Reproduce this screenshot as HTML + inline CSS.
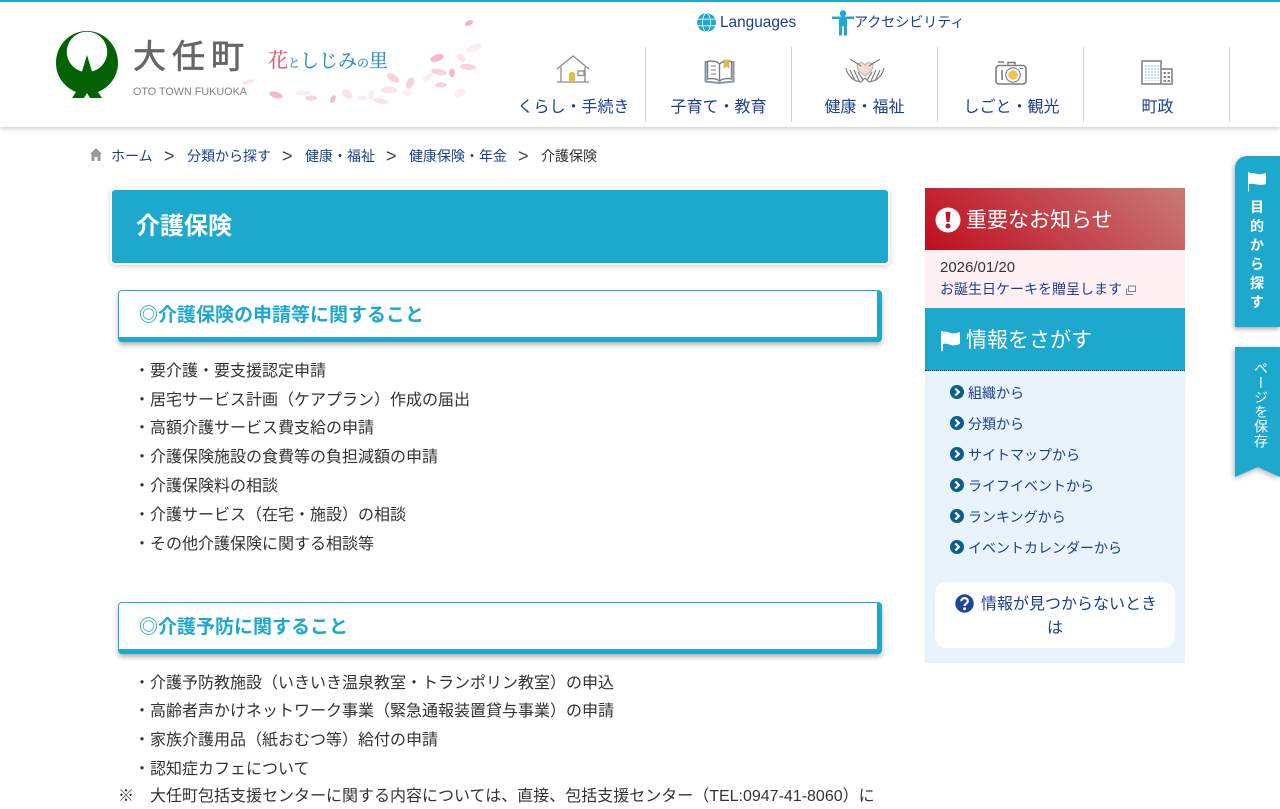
<!DOCTYPE html>
<html lang="ja"><head><meta charset="utf-8"><title>介護保険</title>
<style>
html,body{margin:0;padding:0;background:#fff}
body{width:1280px;height:800px;overflow:hidden;position:relative;font-family:"Liberation Sans","Noto Sans CJK JP",sans-serif;color:#333;font-size:16px}
.a{position:absolute;white-space:nowrap}
.link{color:#1b3f8f}
#hd{position:absolute;left:0;top:0;width:1280px;height:127px;background:#fff;border-top:2px solid #1da8cd;box-sizing:border-box;box-shadow:0 1px 5px rgba(0,0,0,.25)}
.sep{position:absolute;top:47px;width:1px;height:75px;background:#d2d2d2}
.nav{position:absolute;top:97px;width:145px;text-align:center;font-size:16px;line-height:22px;color:#1b3f8f}
.bc{font-size:14px;line-height:20px;top:146px}
.gt{font-size:18px;color:#444;top:146px;line-height:20px}
.h1{position:absolute;left:112px;top:190px;width:776px;height:73px;background:#1da8cd;border-radius:3px;box-shadow:0 0 0 2px #fff,0 1px 4px 2px rgba(0,0,0,.2)}
.h2{position:absolute;left:118px;width:764px;height:52px;box-sizing:border-box;background:#fff;border:1px solid #1da8cd;border-right-width:5px;border-bottom-width:5px;border-radius:4px;box-shadow:0 3px 5px rgba(0,0,0,.3)}
.h2t{font-size:19px;font-weight:700;color:#1da8cd;line-height:28px}
.li{left:134px;line-height:24px;color:#333;font-size:16px}
.s{font-size:14px;line-height:20px;left:968px;color:#1b3f8f}
.dot{position:absolute;left:950px;width:14px;height:14px}
</style></head><body>
<div id="hd"></div>

<!-- logo -->
<svg class="a" style="left:50px;top:15px" width="440" height="95" viewBox="50 15 440 95">
<path fill="#036303" d="M87 31C70 31 56 45 56 63c0 13 8 24 20 29l-4 6h12l3-5 3 5h12l-4-6c12-5 20-16 20-29 0-18-14-32-31-32z"/>
<path fill="#fff" d="M82 71.500A20.200 20.200 0 1 1 92 71.500L87 55z"/>
<g fill="#f6d3dc">
<ellipse cx="469" cy="23" rx="4.500" ry="2.500" fill="#f0b4c4" transform="rotate(-25 469 23)"/>
<ellipse cx="474" cy="48" rx="8" ry="3.500" fill="#fbeef1" transform="rotate(-25 474 48)"/>
<ellipse cx="437" cy="58" rx="7" ry="3.500" fill="#f3b9c8" transform="rotate(-20 437 58)"/>
<ellipse cx="461" cy="58" rx="5" ry="3" fill="#fae3e9" transform="rotate(35 461 58)"/>
<ellipse cx="468" cy="67" rx="8" ry="3" transform="rotate(5 468 67)"/>
<ellipse cx="439" cy="72" rx="8" ry="3" transform="rotate(10 439 72)"/>
<ellipse cx="452" cy="73" rx="3" ry="4.500" fill="#f3bccb"/>
<ellipse cx="428" cy="77" rx="6" ry="2.500" fill="#fbeef1" transform="rotate(-35 428 77)"/>
<ellipse cx="441" cy="85" rx="6" ry="2.500"/>
<ellipse cx="460" cy="93" rx="6" ry="4" fill="#fbeef1" transform="rotate(-30 460 93)"/>
<ellipse cx="393" cy="78" rx="7" ry="3.500" transform="rotate(30 393 78)"/>
<ellipse cx="410" cy="83" rx="3.500" ry="6" transform="rotate(25 410 83)"/>
<ellipse cx="389" cy="90" rx="8" ry="3.500" fill="#fae3e9"/>
<ellipse cx="408" cy="93" rx="5" ry="3" fill="#fbeef1"/>
<ellipse cx="347" cy="94" rx="6" ry="4" fill="#fae3e9" transform="rotate(35 347 94)"/>
<ellipse cx="371" cy="95" rx="3" ry="4.500" fill="#fbeef1"/>
<ellipse cx="362" cy="98" rx="5" ry="2.500" fill="#fbeef1"/>
<ellipse cx="381" cy="101" rx="8" ry="2.500" fill="#fae3e9" transform="rotate(10 381 101)"/>
<ellipse cx="276" cy="95" rx="7" ry="3" fill="#f3b9c8" transform="rotate(15 276 95)"/>
<ellipse cx="303" cy="93" rx="8" ry="2.500" fill="#fbeef1"/>
<ellipse cx="311" cy="98" rx="6" ry="2.500" />
<ellipse cx="333" cy="99" rx="2.500" ry="4" fill="#f3b9c8" transform="rotate(25 333 99)"/>
<ellipse cx="248" cy="82" rx="6" ry="2" fill="#fae3e9" transform="rotate(-15 248 82)"/>
</g>
</svg>
<div class="a" style="left:133px;top:36px;font-size:33px;line-height:42px;letter-spacing:6px;color:#666;-webkit-text-stroke:.7px #666">大任町</div>
<div class="a" style="left:133px;top:85px;font-size:10.800px;line-height:14px;color:#828282">OTO TOWN FUKUOKA</div>
<div class="a" style="left:268px;top:46px;font-family:'Noto Serif CJK SC','Liberation Serif',serif;line-height:26px;font-size:19px;color:#2c8dc0;-webkit-text-stroke:.2px #2c8dc0"><span style="color:#d9626b;-webkit-text-stroke:.2px #d9626b;font-size:20px">花</span><span style="font-size:12px">と</span>しじみ<span style="font-size:12px">の</span>里</div>

<!-- top links -->
<svg class="a" style="left:697px;top:13px" width="19" height="19" viewBox="0 0 19 19"><circle cx="9.500" cy="9.500" r="9.400" fill="#1da8cd"/><g fill="none" stroke="#fff" stroke-width=".8"><ellipse cx="9.500" cy="9.500" rx="4" ry="9.200"/><path d="M.5 6.200h18M.5 12.800h18"/></g></svg>
<div class="a link" style="left:720px;top:13px;font-size:15.400px;line-height:20px">Languages</div>
<svg class="a" style="left:832px;top:10px" width="22" height="26" viewBox="0 0 22 26"><circle cx="11" cy="3.500" r="3.200" fill="#1da8cd"/><path fill="#1da8cd" d="M0 6.500h22v2.500h-7v16.500h-3v-9h-2v9H7V9H0z"/></svg>
<div class="a link" style="left:854px;top:12px;font-size:14px;line-height:20px">アクセシビリティ</div>

<!-- nav icons -->
<svg class="a" style="left:555px;top:54px" width="36" height="30" viewBox="0 0 36 30" fill="none" stroke="#8a8a8a" stroke-width="1.300"><path d="M2 15 18 2l16 13M6 13v15M30 13v15M2 28h32"/><rect x="14" y="18" width="6" height="10" rx="2.500" fill="#e9bb42" stroke="none"/><rect x="23" y="17" width="6" height="4.500"/></svg>
<svg class="a" style="left:704px;top:58px" width="31" height="27" viewBox="0 0 31 27" fill="none" stroke="#7d7d7d" stroke-width="1.400"><path d="M3 4H1.500v19.500L15 25l14.500-1.500V4H28" stroke="#8a96a5" stroke-width="2"/><path d="M15.500 6C13 3 7 2.500 3.500 3.500v17.500c4-1 9-.5 12 2 3-2.500 8-3 12-2V3.500c-4-1-9-.5-12 2.500zM15.500 6v17"/><path d="M7 8h5M7 12h5M7 16h5" stroke-width="1"/><path d="M20 2h5v8l-2.500-2-2.500 2z" fill="#e9bb42" stroke="#c9a84a" stroke-width=".6"/></svg>
<svg class="a" style="left:845px;top:59px" width="40" height="25" viewBox="0 0 40 25" fill="none" stroke="#7d7d7d" stroke-width="1.200"><path d="M20 17c-4-3-8-6-8-10 0-3 5-5 8-1 3-4 8-2 8 1 0 4-4 7-8 10z" fill="#f7d9d2" stroke="#c9b3ae"/><path d="M5 0l11 7M35 0 24 7"/><path d="M1 9c1 6 6 13 15 14l4-4M39 9c-1 6-6 13-15 14l-4-4M5 11l5 11M9 11l5 11M35 11l-5 11M31 11l-5 11M13 13l5 8M27 13l-5 8"/></svg>
<svg class="a" style="left:995px;top:60px" width="32" height="25" viewBox="0 0 32 25" fill="none" stroke="#7d7d7d" stroke-width="1.600"><rect x="1" y="5.500" width="30" height="18.500" rx="3"/><path d="M3 2h6M13 4.500V2.500h7v2" stroke-width="1.600"/><path d="M7 10v10"/><circle cx="18" cy="15" r="7.200" stroke-width="1.100"/><circle cx="18" cy="15" r="4.800" fill="#eec450" stroke="none"/><path d="M25 8.500h3" stroke-width="1"/></svg>
<svg class="a" style="left:1141px;top:60px" width="32" height="25" viewBox="0 0 32 25"><path fill="#fff" stroke="#7d7d7d" stroke-width="1.500" d="M1 1h19v23H1zM20 9h11v15H20z"/><g fill="none" stroke="#cddff5" stroke-width="2" stroke-dasharray="2 1"><path d="M5 5v16M8 5v16M11 5v16M14 5v16M17 5v16"/></g><g fill="#8a8a8a"><rect x="22.500" y="12" width="2.500" height="2"/><rect x="26.500" y="12" width="2.500" height="2"/><rect x="22.500" y="16" width="2.500" height="2"/><rect x="26.500" y="16" width="2.500" height="2"/><rect x="22.500" y="20" width="2.500" height="2"/><rect x="26.500" y="20" width="2.500" height="2"/></g></svg>

<div class="sep" style="left:645px"></div><div class="sep" style="left:791px"></div><div class="sep" style="left:937px"></div><div class="sep" style="left:1083px"></div><div class="sep" style="left:1229px"></div>
<div class="nav" style="left:501px">くらし・手続き</div>
<div class="nav" style="left:646px">子育て・教育</div>
<div class="nav" style="left:792px">健康・福祉</div>
<div class="nav" style="left:939px">しごと・観光</div>
<div class="nav" style="left:1085px">町政</div>

<!-- breadcrumb -->
<svg class="a" style="left:90px;top:148px" width="12" height="13" viewBox="0 0 12 13"><path fill="#999" d="M6 0 0 6h1.500v7h3V9h3v4h3V6H12z"/></svg>
<div class="a bc link" style="left:111px">ホーム</div>
<div class="a gt" style="left:164px">&gt;</div>
<div class="a bc link" style="left:187px">分類から探す</div>
<div class="a gt" style="left:282px">&gt;</div>
<div class="a bc link" style="left:305px">健康・福祉</div>
<div class="a gt" style="left:386px">&gt;</div>
<div class="a bc link" style="left:409px">健康保険・年金</div>
<div class="a gt" style="left:518px">&gt;</div>
<div class="a bc" style="left:541px">介護保険</div>

<!-- main -->
<div class="h1"></div>
<div class="a" style="left:136px;top:210px;font-size:24px;font-weight:700;line-height:34px;color:#fff">介護保険</div>

<div class="h2" style="top:290px"></div>
<div class="a h2t" style="left:139px;top:302px">◎介護保険の申請等に関すること</div>
<div class="a li" style="top:360px">・要介護・要支援認定申請</div>
<div class="a li" style="top:389px">・居宅サービス計画（ケアプラン）作成の届出</div>
<div class="a li" style="top:417px">・高額介護サービス費支給の申請</div>
<div class="a li" style="top:446px">・介護保険施設の食費等の負担減額の申請</div>
<div class="a li" style="top:475px">・介護保険料の相談</div>
<div class="a li" style="top:504px">・介護サービス（在宅・施設）の相談</div>
<div class="a li" style="top:533px">・その他介護保険に関する相談等</div>

<div class="h2" style="top:602px"></div>
<div class="a h2t" style="left:139px;top:614px">◎介護予防に関すること</div>
<div class="a li" style="top:672px">・介護予防教施設（いきいき温泉教室・トランポリン教室）の申込</div>
<div class="a li" style="top:700px">・高齢者声かけネットワーク事業（緊急通報装置貸与事業）の申請</div>
<div class="a li" style="top:729px">・家族介護用品（紙おむつ等）給付の申請</div>
<div class="a li" style="top:758px">・認知症カフェについて</div>
<div class="a li" style="left:118px;top:785px">※　大任町包括支援センターに関する内容については、直接、包括支援センター（TEL:0947-41-8060）に</div>

<!-- sidebar -->
<div class="a" style="left:925px;top:188px;width:260px;height:62px;background:linear-gradient(45deg,#c00d20,#c87a78)"></div>
<svg class="a" style="left:935px;top:207px" width="26" height="26" viewBox="0 0 26 26"><circle cx="13" cy="13" r="12.500" fill="#fff"/><path fill="#c0152a" d="M10.500 5h5l-1 10h-3z"/><circle cx="13" cy="19" r="2.500" fill="#c0152a"/></svg>
<div class="a" style="left:966px;top:206px;font-size:21px;line-height:30px;color:#fff">重要なお知らせ</div>
<div class="a" style="left:925px;top:250px;width:260px;height:58px;background:#fff0f3"></div>
<div class="a" style="left:940px;top:258px;font-size:15px;line-height:20px">2026/01/20</div>
<div class="a link" style="left:940px;top:279px;font-size:14px;line-height:20px">お誕生日ケーキを贈呈します</div>
<svg class="a" style="left:1126px;top:285px" width="10" height="10" viewBox="0 0 10 10" fill="none" stroke="#7b8594"><rect x="2.500" y="1" width="7" height="5.500"/><path d="M.5 3.500v6h7"/></svg>
<div class="a" style="left:925px;top:308px;width:260px;height:63px;box-sizing:border-box;background:#1da8cd;border-bottom:1px dotted #333"></div>
<svg class="a" style="left:940px;top:330px" width="21" height="21" viewBox="0 0 21 21"><path fill="#fff" d="M1 1h2v1c3-1 5 0 8 1s6 0 9-1v12c-3 1-6 2-9 1s-5-2-8-1v7H1z"/></svg>
<div class="a" style="left:966px;top:326px;font-size:21px;line-height:30px;color:#fff">情報をさがす</div>
<div class="a" style="left:925px;top:371px;width:260px;height:292px;background:#e8f3fc"></div>
<svg width="0" height="0" style="position:absolute"><defs><symbol id="d" viewBox="0 0 14 14"><circle cx="7" cy="7" r="7" fill="#0b5f8a"/><path d="M5.300 3.500 8.800 7l-3.500 3.500" fill="none" stroke="#fff" stroke-width="2.200"/></symbol></defs></svg>
<svg class="dot" style="top:385px"><use href="#d"/></svg><div class="a s" style="top:383px">組織から</div>
<svg class="dot" style="top:416px"><use href="#d"/></svg><div class="a s" style="top:414px">分類から</div>
<svg class="dot" style="top:447px"><use href="#d"/></svg><div class="a s" style="top:445px">サイトマップから</div>
<svg class="dot" style="top:478px"><use href="#d"/></svg><div class="a s" style="top:476px">ライフイベントから</div>
<svg class="dot" style="top:509px"><use href="#d"/></svg><div class="a s" style="top:507px">ランキングから</div>
<svg class="dot" style="top:540px"><use href="#d"/></svg><div class="a s" style="top:538px">イベントカレンダーから</div>
<div class="a" style="left:935px;top:582px;width:240px;height:66px;background:#fff;border-radius:12px"></div>
<svg class="a" style="left:955px;top:594px" width="19" height="19" viewBox="0 0 19 19"><circle cx="9.500" cy="9.500" r="9.200" fill="#1b4596"/><path d="M6.300 7.300c0-4.200 6.500-4.200 6.500-.2 0 2.500-3.200 2.600-3.200 4.800" fill="none" stroke="#fff" stroke-width="2.200"/><circle cx="9.600" cy="14.800" r="1.500" fill="#fff"/></svg>
<div class="a link" style="left:981px;top:594px;line-height:22px">情報が見つからないとき</div>
<div class="a link" style="left:1047px;top:618px;line-height:22px">は</div>

<!-- right tabs -->
<div class="a" style="left:1235px;top:156px;width:45px;height:171px;background:#1da8cd;border-radius:12px 0 0 0;box-shadow:-1px 2px 5px rgba(0,0,0,.35)"></div>
<svg class="a" style="left:1248px;top:172px" width="19" height="20" viewBox="0 0 19 20"><path fill="#fff" d="M0 0h1v1c3-.5 5 .5 8 1 3 .5 6 0 9-1v11c-3 1-6 1-9 .5s-5-1-8-.5v7.500H0z"/></svg>
<div class="a" style="left:1247px;top:198px;width:20px;text-align:center;font-size:14px;font-weight:700;line-height:19px;color:#fff;white-space:normal">目<br>的<br>か<br>ら<br>探<br>す</div>
<svg class="a" style="left:1230px;top:347px;overflow:visible" width="50" height="135" viewBox="0 0 50 135"><path fill="#1da8cd" d="M5 0h45v130l-22-10-23 10z" style="filter:drop-shadow(-1px 2px 3px rgba(0,0,0,.3))"/></svg>
<div class="a" style="left:1253px;top:361px;writing-mode:vertical-rl;font-size:14px;line-height:16px;letter-spacing:.6px;color:#fff">ページを保存</div>
</body></html>
